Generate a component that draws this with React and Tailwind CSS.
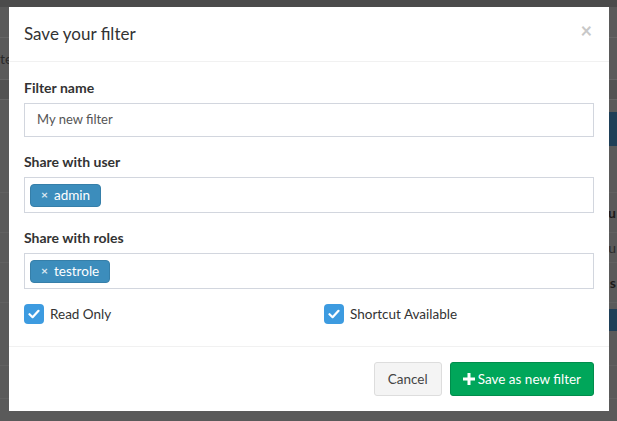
import React from 'react';

const font = { fontFamily: 'Lato, "Noto Sans", sans-serif' };

function Tag({ label }) {
  return (
    <span className="inline-flex items-center h-[23px] px-[10px] gap-[6px] rounded-[4px] bg-[#3c8dbc] border border-[#367fa9] text-white text-[13.5px]">
      <span className="text-[12px] font-bold text-[#dbe8f1]">×</span>
      <span>{label}</span>
    </span>
  );
}

function Check({ label }) {
  return (
    <label className="flex items-center gap-[6px] text-[13.5px] text-[#333]">
      <span className="w-[20px] h-[20px] rounded-[4px] bg-[#3d9be0] flex items-center justify-center">
        <svg width="12" height="10" viewBox="0 0 12 10">
          <path d="M1.5 5.2 L4.6 8.2 L10.5 1.8" fill="none" stroke="white" strokeWidth="2.2" strokeLinecap="round" strokeLinejoin="round" />
        </svg>
      </span>
      {label}
    </label>
  );
}

function BackdropPage() {
  // page under the dimmed overlay, only its edges show
  return (
    <div className="flex flex-col text-[14px] text-[#222]">
      <div className="h-[7px] bg-[#4b4b4b]" />
      <div className="h-[31px] border-b border-[#666]" />
      <div className="h-[42px] border-b border-[#666] flex items-center">
        <span className="text-[#2a2a2a]">te</span>
      </div>
      <div className="h-[20px] bg-[#535353] border-b border-[#666]" />
      <div className="h-[12px]" />
      <div className="h-[34px] flex justify-end">
        <div className="w-[12px] bg-[#1f3f57]" />
      </div>
      <div className="h-[47px] border-b border-[#616161]" />
      <div className="h-[40px] border-b border-[#616161] flex justify-end items-center pr-[1px]">
        <span className="font-bold text-[#1a1a1a]">u</span>
      </div>
      <div className="h-[30px] border-b border-[#616161] flex justify-end items-center pr-[1px]">
        <span className="text-[#2a2a2a]">u</span>
      </div>
      <div className="h-[40px] border-b border-[#616161] flex justify-end items-center pr-[1px]">
        <span className="font-bold text-[#1a1a1a]">s</span>
      </div>
      <div className="h-[6px]" />
      <div className="h-[22px] flex justify-end">
        <div className="w-[8px] bg-[#1f3f57]" />
      </div>
      <div className="h-[35px] border-b border-[#616161]" />
      <div className="h-[33px] border-b border-[#616161]" />
    </div>
  );
}

export default function App() {
  return (
    <div className="relative w-[617px] h-[421px] overflow-hidden bg-[#5a5a5a]" style={font}>
      <BackdropPage />

      {/* Modal */}
      <div className="absolute left-[9px] top-[7px] w-[600px] bg-white text-[#333]">
        <div className="flex items-center justify-between px-[15px] h-[55px] border-b border-[#f1f1f1]">
          <h4 className="text-[17px] text-[#333]">Save your filter</h4>
          <span className="text-[20px] font-bold text-[#c8c8c8] leading-none mt-[-8px] mr-[2px]">×</span>
        </div>

        <div className="px-[15px] pt-[16px] pb-[22px]">
          <div className="mb-[15px]">
            <div className="text-[14px] font-bold leading-[20px] mb-[5px]">Filter name</div>
            <div className="h-[34px] border border-[#d2d6de] flex items-center px-[12px] text-[13px] text-[#555]">
              My new filter
            </div>
          </div>

          <div className="mb-[15px]">
            <div className="text-[14px] font-bold leading-[20px] mb-[5px]">Share with user</div>
            <div className="h-[36px] border border-[#d2d6de] flex items-center px-[5px]">
              <Tag label="admin" />
            </div>
          </div>

          <div className="mb-[15px]">
            <div className="text-[14px] font-bold leading-[20px] mb-[5px]">Share with roles</div>
            <div className="h-[36px] border border-[#d2d6de] flex items-center px-[5px]">
              <Tag label="testrole" />
            </div>
          </div>

          <div className="grid grid-cols-2 gap-[30px]">
            <Check label="Read Only" />
            <Check label="Shortcut Available" />
          </div>
        </div>

        <div className="border-t border-[#f1f1f1] p-[15px] flex justify-end gap-[8px]">
          <button className="h-[34px] px-[13px] rounded-[3px] border border-[#ddd] bg-[#f4f4f4] text-[13.5px] text-[#444]">
            Cancel
          </button>
          <button className="h-[34px] px-[12px] rounded-[3px] border border-[#008d4c] bg-[#00a65a] text-[13.5px] text-white flex items-center gap-[3px]">
            <svg width="12" height="12" viewBox="0 0 12 12">
              <path d="M4.5 0h3v4.5H12v3H7.5V12h-3V7.5H0v-3h4.5z" fill="white" />
            </svg>
            Save as new filter
          </button>
        </div>
      </div>
    </div>
  );
}
